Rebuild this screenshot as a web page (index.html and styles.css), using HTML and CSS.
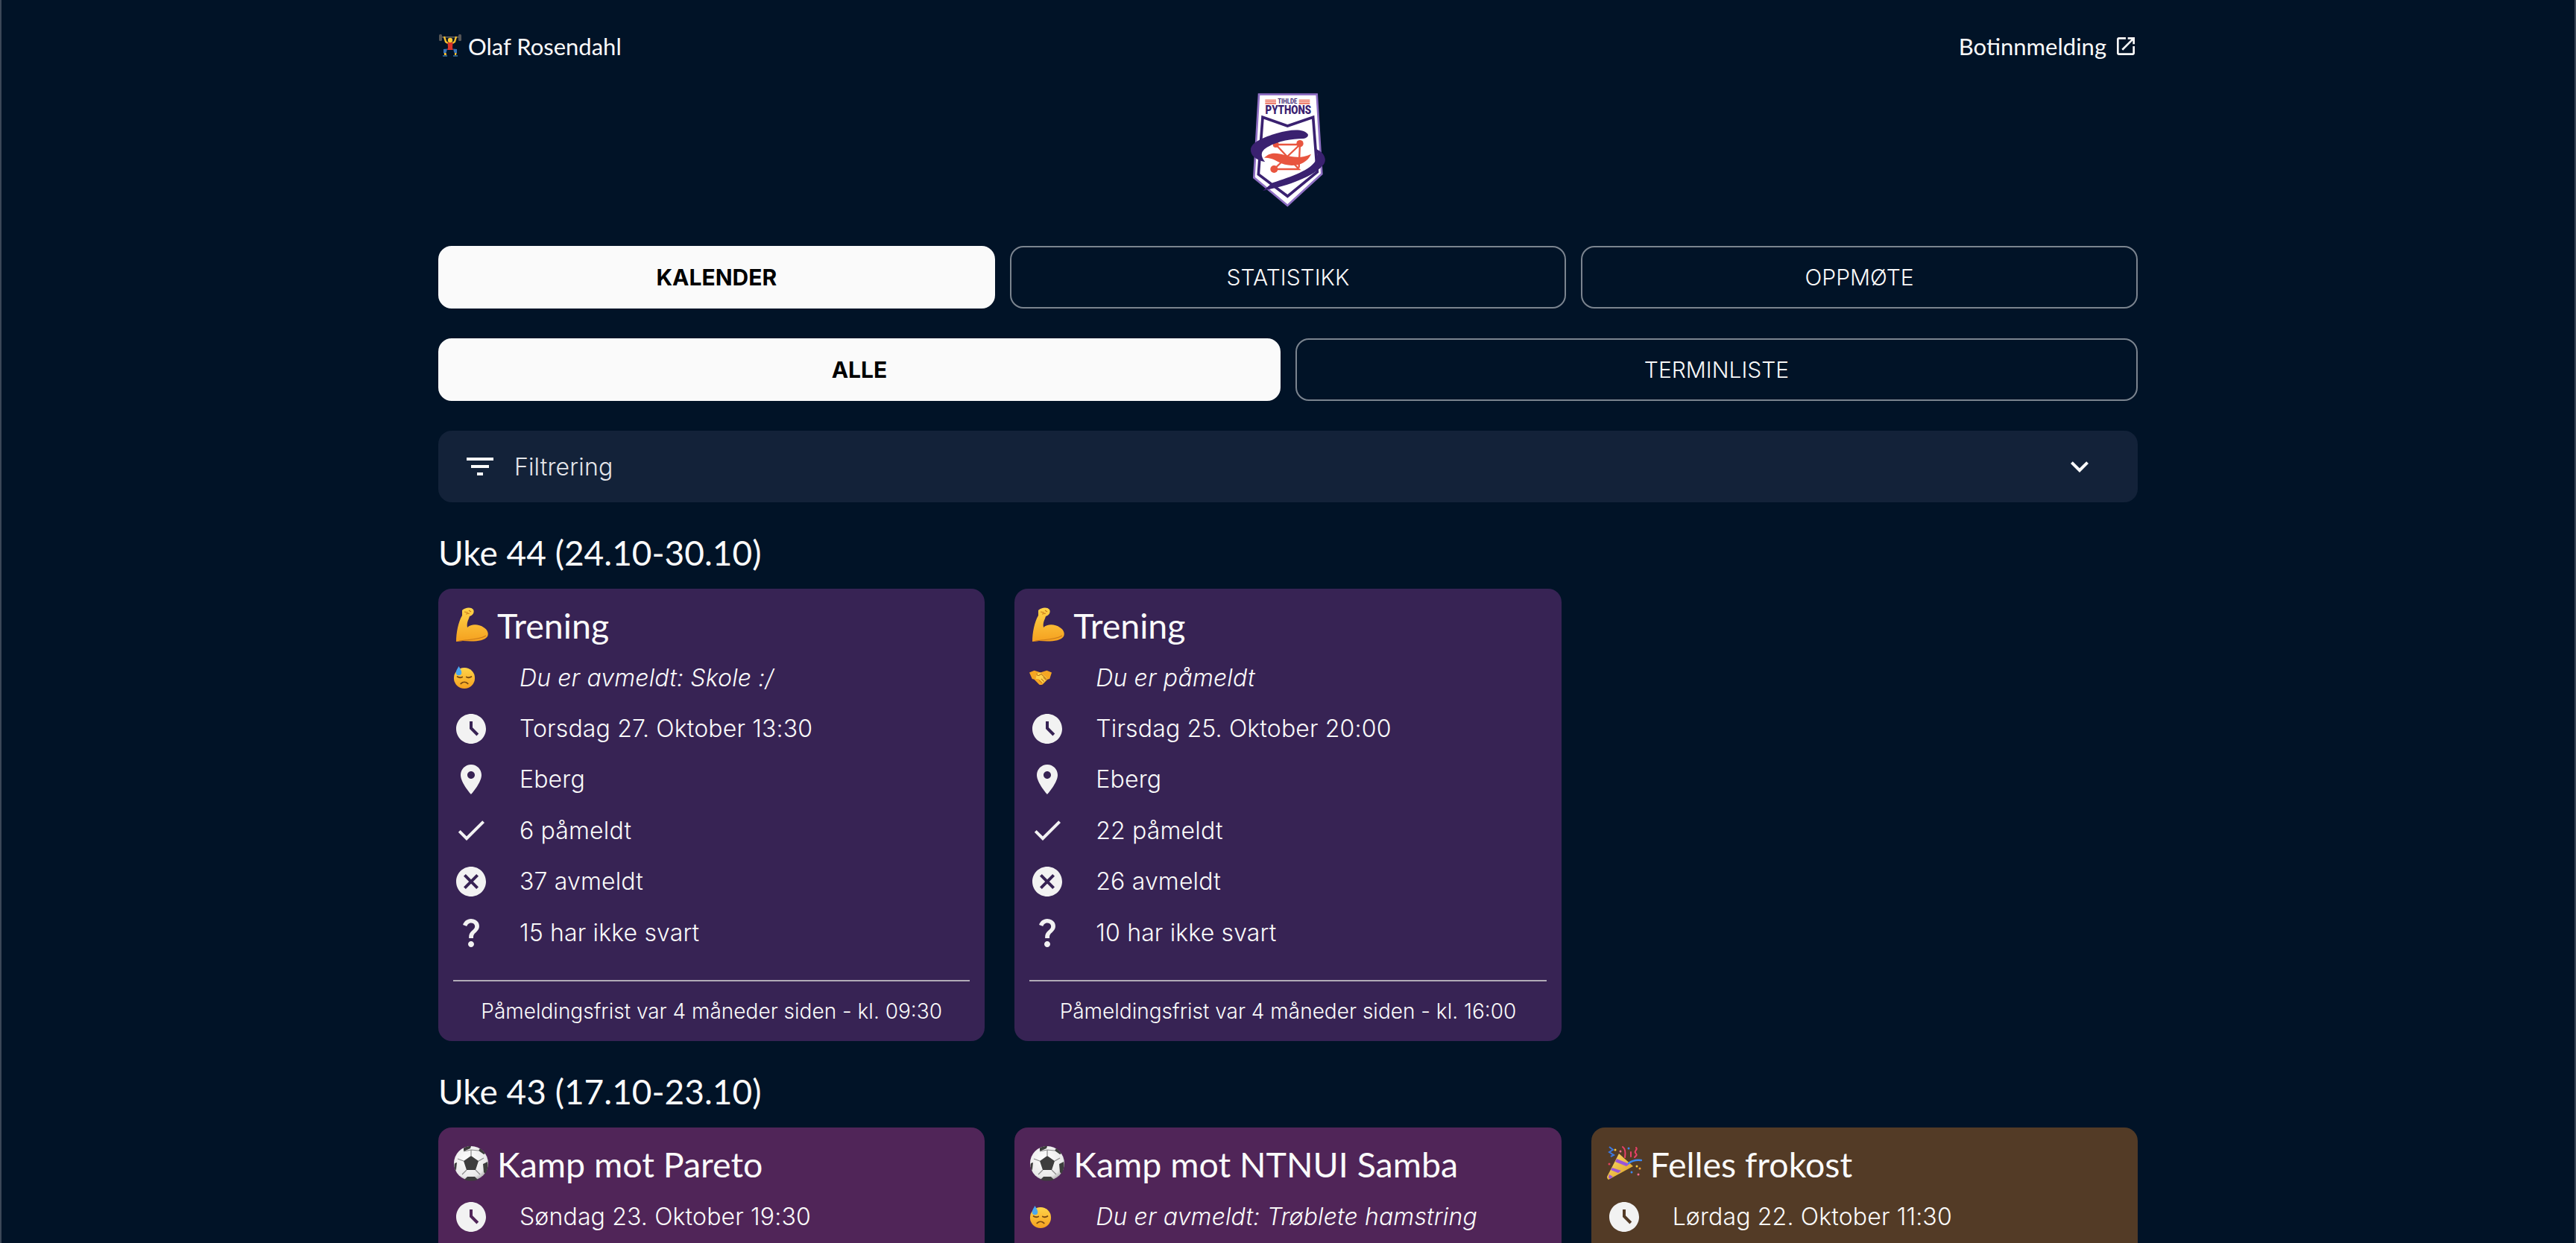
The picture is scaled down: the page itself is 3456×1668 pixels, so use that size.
FILE: index.html

```html
<!DOCTYPE html>
<html lang="no">
<head>
    <meta charset="UTF-8">
    <title>Kalender - TIHLDE Pythons</title>
    <link rel="stylesheet" href="styles.css">
</head>
<body>
    <svg class="sprites" width="0" height="0" aria-hidden="true">
        <defs>
            <linearGradient id="skin" x1="0" y1="0" x2="0" y2="1">
                <stop offset="0" stop-color="#ffd54a"/>
                <stop offset="1" stop-color="#f5a01f"/>
            </linearGradient>
            <linearGradient id="cone" x1="0" y1="0" x2="1" y2="1">
                <stop offset="0" stop-color="#ffdf6a"/>
                <stop offset="1" stop-color="#d79a22"/>
            </linearGradient>
            <radialGradient id="leather" cx="0.42" cy="0.38" r="0.7">
                <stop offset="0" stop-color="#ffffff"/>
                <stop offset="0.75" stop-color="#e9e9e9"/>
                <stop offset="1" stop-color="#9b9b9b"/>
            </radialGradient>
        </defs>

        <symbol id="i-time" viewBox="0 0 24 24"><path d="M11.99 2C6.47 2 2 6.48 2 12s4.47 10 9.99 10C17.52 22 22 17.52 22 12S17.52 2 11.99 2zm3.71 14.71L11 12V7h2v4.17l4.12 4.12-1.42 1.42z"/></symbol>
        <symbol id="i-place" viewBox="0 0 24 24"><path d="M12 2C8.13 2 5 5.13 5 9c0 5.25 7 13 7 13s7-7.75 7-13c0-3.87-3.13-7-7-7zm0 9.5c-1.38 0-2.5-1.12-2.5-2.5s1.12-2.5 2.5-2.5 2.5 1.12 2.5 2.5-1.12 2.5-2.5 2.5z"/></symbol>
        <symbol id="i-check" viewBox="0 0 24 24"><path d="M9 16.17 4.83 12l-1.42 1.41L9 19 21 7l-1.41-1.41z"/></symbol>
        <symbol id="i-cancel" viewBox="0 0 24 24"><path d="M12 2C6.47 2 2 6.47 2 12s4.47 10 10 10 10-4.47 10-10S17.53 2 12 2zm5 13.59L15.59 17 12 13.41 8.41 17 7 15.59 10.59 12 7 8.41 8.41 7 12 10.59 15.59 7 17 8.41 13.41 12 17 15.59z"/></symbol>
        <symbol id="i-question" viewBox="0 0 24 24"><path d="M11.07 12.85c.77-1.39 2.25-2.21 3.11-3.44.91-1.29.4-3.7-2.18-3.7-1.69 0-2.52 1.28-2.87 2.34L6.54 6.96C7.25 4.83 9.18 3 11.99 3c2.35 0 3.96 1.07 4.78 2.41.7 1.15 1.11 3.3.03 4.9-1.2 1.77-2.35 2.31-2.97 3.45-.25.46-.35.76-.35 2.24h-2.89c-.01-.78-.13-2.05.48-3.15zM14 20c0 1.1-.9 2-2 2s-2-.9-2-2 .9-2 2-2 2 .9 2 2z"/></symbol>

        <!-- emoji -->
        <symbol id="e-muscle" viewBox="0 0 48 48">
            <path fill="url(#skin)" d="M12 5C16 1 24 0 27 4c2 4-1 8-5 9l-1 3c-2 4-3 8-2 12 5-5 15-5 22 0 5 3 7 8 5 12-5 7-19 7-33 6l-9 1C4 35 7 20 12 12z"/>
            <path fill="none" stroke="#c9791a" stroke-width="1.2" d="M15 7l5 1M17 10l5-1M21 5l3 2M8 46c12-2 26-1 36-7"/>
        </symbol>
        <symbol id="e-sweat" viewBox="0 0 32 32">
            <circle cx="16" cy="17" r="15" fill="url(#skin)"/>
            <path fill="none" stroke="#7a4a12" stroke-width="2" stroke-linecap="round" d="M6 15c2 1.500 5 1.500 7 .5M19 15.500c2 1 5 1 7-.5M11 25c3-3 7-3 10 0"/>
            <path fill="#4aa8f0" d="M8 0c2 4 4 6 4 9a4 4 0 0 1-8 0c0-3 2-5 4-9z"/>
        </symbol>
        <symbol id="e-shake" viewBox="0 0 32 32">
            <path fill="#f5a623" d="M0 9l7-3 6 2 3 1 3-1 6-2 7 3-3 9-3 1-7 7c-2 1-4 1-5 0l-7-7-3-1z"/>
            <path fill="#ffd04a" d="M11 10l5-1 7 6 3 3-2 2-3 3-2 1-6-6-4 0 2-8z"/>
            <path fill="none" stroke="#b9741a" stroke-width="1.100" d="M11 10c-1 3 1 4 3 3l3-2 8 8M18 24l-4-4M21 22l-4-4M24 20l-4-4"/>
        </symbol>
        <symbol id="e-ball" viewBox="0 0 48 48">
            <circle cx="24" cy="24" r="23" fill="url(#leather)"/>
            <path fill="#3d3d3d" d="M24 14l10 7-4 12H18l-4-12z"/>
            <path fill="#3d3d3d" d="M14 3.500c3-2 7-2.500 10-2.500l-1 3-9 4zM36 4c3 2 5 4 7 7l-2 1-7-5zM46 22c1 5 0 12-3 16l-2-2-1-11zM15 46c5 2 13 2 18 0l-4-4H19zM2 24c-1 3 0 7 1 10l1-2 1-9z"/>
            <path fill="none" stroke="#8a8a8a" stroke-width="1.200" d="M24 14V6M34 21l7-4M30 33l6 6M18 33l-6 6M14 21l-8-3M14 8l10-2 10 1"/>
        </symbol>
        <symbol id="e-party" viewBox="0 0 48 48">
            <path fill="url(#cone)" d="M17 11l19 17L3 46c-2-1-2-3-2-4z"/>
            <path fill="#9a55d8" d="M14 18l17 7-4 3-15-6zM8 30l12 4-4 3-10-4zM4 39l5 3-4 3-2-2z"/>
            <path fill="none" stroke="#3c78e0" stroke-width="2" d="M4 2l5 4-5 3 6 4-4 2"/>
            <path fill="none" stroke="#e8406a" stroke-width="2" stroke-linecap="round" d="M22 2c4 3 4 8 3 14M40 3c3 3-3 4-1 7s3 2-1 6M33 9l0 6"/>
            <path fill="none" stroke="#3c88f0" stroke-width="2.500" stroke-linecap="round" d="M30 24c5-4 10-5 17-4"/>
            <circle cx="12" cy="6" r="1.500" fill="#f8c63a"/><circle cx="30" cy="4" r="1.500" fill="#3c88f0"/>
            <circle cx="41" cy="28" r="1.500" fill="#f8c63a"/><circle cx="45" cy="31" r="1.500" fill="#f09a30"/>
            <circle cx="34" cy="36" r="1.500" fill="#3c88f0"/><circle cx="43" cy="39" r="1.500" fill="#ef7090"/>
            <circle cx="4" cy="25" r="1.500" fill="#e0405a"/><circle cx="19" cy="8" r="1.500" fill="#ef7090"/>
        </symbol>
        <symbol id="e-lifter" viewBox="0 0 32 32">
            <rect x="3" y="3" width="26" height="1.500" fill="#666"/>
            <rect x="1" y="0" width="4" height="9" rx="1.500" fill="#555"/>
            <rect x="27" y="0" width="4" height="9" rx="1.500" fill="#555"/>
            <circle cx="16" cy="8" r="3.200" fill="#fbc934"/>
            <path fill="none" stroke="#fbc02d" stroke-width="2.400" d="M8 3l2 7 3 2M24 3l-2 7-3 2"/>
            <path fill="#d8342a" d="M12.500 11h7l-.5 7 1 3h-8l1-3z"/>
            <path fill="#3a74b8" d="M7 20l5-.5-1 4-1 2H7zM25 20l-5-.5 1 4 1 2h3z"/>
            <path fill="#fbc02d" d="M8 25h2.500l.5 3H8zM22 25h2.500l-.5 3H22z"/>
            <path fill="#2a5a85" d="M6 28h6v2H6zM20 28h6v2h-6z"/>
        </symbol>
    </svg>

    <div class="page">
        <header class="top-bar">
            <a class="top-link">
                <svg class="lifter"><use href="#e-lifter"/></svg>
                Olaf Rosendahl
            </a>
            <a class="top-link">
                Botinnmelding
                <svg class="external" viewBox="0 0 24 24"><path d="M19 19H5V5h7V3H5c-1.110 0-2 .9-2 2v14c0 1.100.89 2 2 2h14c1.100 0 2-.9 2-2v-7h-2v7zM14 3v2h3.590l-9.830 9.830 1.410 1.410L19 6.410V10h2V3h-7z"/></svg>
            </a>
        </header>

        <div class="logo-row">
            <svg class="logo" viewBox="24 0 600 600">
                <path d="M207 80H440L460 400 322 527 187 415Z" fill="#fff" stroke="#8f6fc4" stroke-width="8"/>
                <path d="M222 172 322 207 425 172 442 392 322 490 205 402Z" fill="#fff" stroke="#3a2170" stroke-width="11"/>
                <path d="M232 103H276M232 110H276M232 117H276M368 103H412M368 110H412M368 117H412" stroke="#e8553f" stroke-width="4"/>
                <text class="logo-small" x="322" y="118" text-anchor="middle" textLength="78" lengthAdjust="spacingAndGlyphs">TIHLDE</text>
                <text class="logo-big" x="325" y="160" text-anchor="middle" textLength="185" lengthAdjust="spacingAndGlyphs">PYTHONS</text>
                <path d="M275 282H372L268 381H368L275 282M372 278 368 375" fill="none" stroke="#e8553f" stroke-width="7"/>
                <circle cx="275" cy="282" r="12" fill="#e8553f"/>
                <circle cx="372" cy="278" r="14" fill="#e8553f"/>
                <circle cx="268" cy="381" r="15" fill="#e8553f"/>
                <path d="M228 335C280 285 330 360 417 320 398 368 330 378 285 352 265 340 250 335 228 335Z" fill="#e8553f"/>
                <path d="M404 240C385 215 330 222 280 236 225 252 178 272 174 300 172 326 195 345 232 352 212 325 212 308 245 290 285 268 340 258 385 258 400 256 407 248 404 240Z" fill="#3a2170"/>
                <path d="M438 300C472 315 482 345 466 364 430 408 330 448 222 468L262 436C340 410 415 385 436 345 443 330 443 316 438 300Z" fill="#3a2170"/>
            </svg>
        </div>

        <nav class="tabs tabs-three">
            <a class="tab tab-active">Kalender</a>
            <a class="tab">Statistikk</a>
            <a class="tab">Oppmøte</a>
        </nav>
        <nav class="tabs tabs-two">
            <a class="tab tab-active">Alle</a>
            <a class="tab">Terminliste</a>
        </nav>

        <div class="filter-bar">
            <svg class="filter-icon" viewBox="0 0 24 24"><path d="M10 18h4v-2h-4v2zM3 6v2h18V6H3zm3 7h12v-2H6v2z"/></svg>
            <span class="filter-label">Filtrering</span>
            <svg class="filter-arrow" viewBox="0 0 24 24"><path d="M16.590 8.590 12 13.170 7.410 8.590 6 10l6 6 6-6z"/></svg>
        </div>

        <section class="week">
            <h2 class="week-title">Uke 44 (24.10-30.10)</h2>
            <div class="cards">
                <article class="card card-training">
                    <h3 class="card-title"><svg class="title-emoji"><use href="#e-muscle"/></svg>Trening</h3>
                    <div class="row"><svg class="row-emoji"><use href="#e-sweat"/></svg><em>Du er avmeldt: Skole :/</em></div>
                    <div class="row"><svg class="row-icon"><use href="#i-time"/></svg><span>Torsdag 27. Oktober 13:30</span></div>
                    <div class="row"><svg class="row-icon"><use href="#i-place"/></svg><span>Eberg</span></div>
                    <div class="row"><svg class="row-icon"><use href="#i-check"/></svg><span>6 påmeldt</span></div>
                    <div class="row"><svg class="row-icon"><use href="#i-cancel"/></svg><span>37 avmeldt</span></div>
                    <div class="row"><svg class="row-icon"><use href="#i-question"/></svg><span>15 har ikke svart</span></div>
                    <p class="deadline">Påmeldingsfrist var 4 måneder siden - kl. 09:30</p>
                </article>
                <article class="card card-training">
                    <h3 class="card-title"><svg class="title-emoji"><use href="#e-muscle"/></svg>Trening</h3>
                    <div class="row"><svg class="row-emoji"><use href="#e-shake"/></svg><em>Du er påmeldt</em></div>
                    <div class="row"><svg class="row-icon"><use href="#i-time"/></svg><span>Tirsdag 25. Oktober 20:00</span></div>
                    <div class="row"><svg class="row-icon"><use href="#i-place"/></svg><span>Eberg</span></div>
                    <div class="row"><svg class="row-icon"><use href="#i-check"/></svg><span>22 påmeldt</span></div>
                    <div class="row"><svg class="row-icon"><use href="#i-cancel"/></svg><span>26 avmeldt</span></div>
                    <div class="row"><svg class="row-icon"><use href="#i-question"/></svg><span>10 har ikke svart</span></div>
                    <p class="deadline">Påmeldingsfrist var 4 måneder siden - kl. 16:00</p>
                </article>
            </div>
        </section>

        <section class="week">
            <h2 class="week-title">Uke 43 (17.10-23.10)</h2>
            <div class="cards">
                <article class="card card-match">
                    <h3 class="card-title"><svg class="title-emoji"><use href="#e-ball"/></svg>Kamp mot Pareto</h3>
                    <div class="row"><svg class="row-icon"><use href="#i-time"/></svg><span>Søndag 23. Oktober 19:30</span></div>
                </article>
                <article class="card card-match">
                    <h3 class="card-title"><svg class="title-emoji"><use href="#e-ball"/></svg>Kamp mot NTNUI Samba</h3>
                    <div class="row"><svg class="row-emoji"><use href="#e-sweat"/></svg><em>Du er avmeldt: Trøblete hamstring</em></div>
                </article>
                <article class="card card-social">
                    <h3 class="card-title"><svg class="title-emoji"><use href="#e-party"/></svg>Felles frokost</h3>
                    <div class="row"><svg class="row-icon"><use href="#i-time"/></svg><span>Lørdag 22. Oktober 11:30</span></div>
                </article>
            </div>
        </section>
    </div>
</body>
</html>
```

FILE: styles.css

```css
html, body {
    height: 100%;
    margin: 0;
    overflow: hidden;
}

body {
    background: #011327;
    border-left: 2px solid #3c4757;
    border-right: 2px solid #3c4757;
    box-sizing: border-box;
    color: #fafafa;
    font-family: 'Inter', sans-serif;
    font-size: 32px;
    font-weight: 300;
    letter-spacing: 0.15px;
}

.sprites {
    display: block;
    height: 0;
}

.page {
    width: 2280px;
    margin: 0 auto;
    padding-top: 40px;
}

.top-bar {
    display: flex;
    justify-content: space-between;
    height: 44px;
}

.top-link {
    display: flex;
    align-items: center;
    font-family: 'Lato', sans-serif;
    font-size: 31px;
    font-weight: 400;
    letter-spacing: 0;
}

.lifter {
    width: 32px;
    height: 32px;
    margin-right: 8px;
}

.external {
    width: 32px;
    height: 32px;
    margin-left: 10px;
    fill: #fafafa;
}

.logo-row {
    display: flex;
    justify-content: center;
    margin-top: 16px;
}

.logo {
    width: 200px;
    height: 200px;
}

.logo-small {
    font-family: 'Roboto', sans-serif;
    font-size: 25px;
    font-weight: 700;
    letter-spacing: 0;
    fill: #3a2170;
}

.logo-big {
    font-family: 'Roboto', sans-serif;
    font-size: 50px;
    font-weight: 900;
    letter-spacing: 0;
    fill: #3a2170;
}

.tabs {
    display: grid;
    gap: 20px;
    margin-bottom: 40px;
}

.tabs-three {
    grid-template-columns: repeat(3, 1fr);
    margin-top: 30px;
}

.tabs-two {
    grid-template-columns: repeat(2, 1fr);
}

.tab {
    display: flex;
    align-items: center;
    justify-content: center;
    box-sizing: border-box;
    height: 84px;
    border: 2px solid #7b848f;
    border-radius: 18px;
    font-size: 30px;
    letter-spacing: 0;
    text-transform: uppercase;
}

.tab-active {
    background: #fafafa;
    border-color: #fafafa;
    color: #000;
    font-weight: 700;
}

.filter-bar {
    display: flex;
    align-items: center;
    height: 96px;
    padding: 0 54px 0 32px;
    background: #132239;
    border-radius: 18px;
}

.filter-icon, .filter-arrow {
    width: 48px;
    height: 48px;
    fill: #fafafa;
}

.filter-label {
    flex: 1;
    margin-left: 22px;
    color: #e4e6ea;
}

.week {
    margin-top: 36px;
}

.week-title {
    height: 64px;
    margin: 0 0 16px;
    font-family: 'Lato', sans-serif;
    font-size: 46px;
    font-weight: 400;
    letter-spacing: 0;
    line-height: 64px;
}

.cards {
    display: grid;
    grid-template-columns: repeat(3, 1fr);
    gap: 40px;
}

.card {
    box-sizing: border-box;
    min-height: 607px;
    padding: 20px;
    border-radius: 18px;
}

.card-training { background: #372354; }
.card-match { background: #502558; }
.card-social { background: #533b26; }

.card-title {
    display: flex;
    align-items: center;
    box-sizing: border-box;
    height: 65px;
    margin: 0;
    padding-bottom: 8px;
    font-family: 'Lato', sans-serif;
    font-size: 46.5px;
    font-weight: 400;
    letter-spacing: 0;
}

.title-emoji {
    width: 48px;
    height: 48px;
    margin: -2px 11px 0 0;
}

.row {
    display: flex;
    align-items: center;
    height: 68.4px;
}

.row-icon {
    width: 48px;
    height: 48px;
    margin-right: 41px;
    fill: #f2f2f2;
}

.row-emoji {
    width: 30px;
    height: 32px;
    margin-right: 59px;
}

.deadline {
    margin: 30px 0 0;
    padding-top: 20px;
    border-top: 2px solid #b1abb7;
    font-size: 28px;
    letter-spacing: 0;
    line-height: 40px;
    text-align: center;
}
```
